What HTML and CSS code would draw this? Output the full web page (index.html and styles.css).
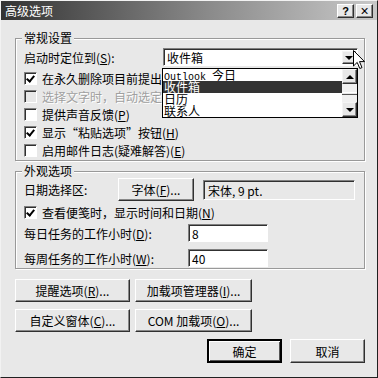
FILE: index.html
```html
<!DOCTYPE html>
<html lang="zh-CN">
  <head>
    <meta charset="UTF-8" />
    <title>高级选项</title>
    <link rel="stylesheet" href="styles.css">
  </head>
  <body>
    <div class="window">
      <div class="titlebar">
        <span class="title">高级选项</span>
        <span class="tbtn">?</span>
        <span class="tbtn close">×</span>
      </div>

      <div class="content">
        <fieldset class="group first">
          <legend>常规设置</legend>
          <div class="row combo-row">
            <label class="grow">启动时定位到(<u>S</u>):</label>
            <div class="combo">
              <span class="combo-text">收件箱</span>
              <span class="arrow-btn"><i class="tri down"></i></span>
            </div>
          </div>
          <!-- the open list hides the rest of these two rows -->
          <div class="check-row"><span class="box checked"></span><span class="cut">在永久删除项目前提出</span></div>
          <div class="check-row disabled"><span class="box dim"></span><span class="cut">选择文字时，自动选定</span></div>
          <div class="check-row"><span class="box"></span>提供声音反馈(<u>P</u>)</div>
          <div class="check-row"><span class="box checked"></span>显示“粘贴选项”按钮(<u>H</u>)</div>
          <div class="check-row"><span class="box"></span>启用邮件日志(疑难解答)(<u>E</u>)</div>
        </fieldset>

        <fieldset class="group second">
          <legend>外观选项</legend>
          <div class="row date-row">
            <label class="date-label">日期选择区:</label>
            <button class="btn font-btn">字体(<u>F</u>)...</button>
            <div class="font-field">宋体, 9 pt.</div>
          </div>
          <div class="check-row note-row"><span class="box checked"></span>查看便笺时，显示时间和日期(<u>N</u>)</div>
          <div class="row hours-row">
            <label class="hours-label">每日任务的工作小时(<u>D</u>):</label>
            <div class="field">8</div>
          </div>
          <div class="row hours-row weekly">
            <label class="hours-label">每周任务的工作小时(<u>W</u>):</label>
            <div class="field">40</div>
          </div>
        </fieldset>

        <div class="btn-row top">
          <button class="btn wide-a">提醒选项(<u>R</u>)...</button>
          <button class="btn wide-b">加载项管理器(<u>I</u>)...</button>
        </div>
        <div class="btn-row">
          <button class="btn wide-a">自定义窗体(<u>C</u>)...</button>
          <button class="btn wide-b">COM 加载项(<u>O</u>)...</button>
        </div>
        <div class="btn-row end">
          <button class="btn action default">确定</button>
          <button class="btn action">取消</button>
        </div>
      </div>

      <!-- open dropdown of the combo box -->
      <div class="dropdown">
        <div class="items">
          <div class="item"><span class="mono">Outlook </span>今日</div>
          <div class="item selected">收件箱</div>
          <div class="item">日历</div>
          <div class="item">联系人</div>
        </div>
        <div class="scrollbar">
          <span class="sb-btn"><i class="tri up"></i></span>
          <span class="sb-track"><span class="sb-thumb"></span></span>
          <span class="sb-btn"><i class="tri down"></i></span>
        </div>
      </div>

      <svg class="cursor" width="12" height="20" viewBox="0 0 12 20">
        <path d="M0.5 0.5 L0.5 16 L4.2 12.4 L6.8 18.5 L9 17.6 L6.5 11.6 L11.5 11.6 Z" fill="#fff" stroke="#000" stroke-width="1" />
      </svg>
    </div>
  </body>
</html>
```

FILE: styles.css
```css
body {
  margin: 0;
  font-family: "Noto Sans CJK SC", sans-serif;
  font-size: 12px;
  color: #000;
}
.window {
  position: relative;
  width: 378px;
  height: 378px;
  box-sizing: border-box;
  background: #e8e8e8;
  border: 1px solid;
  border-color: #f2f2f2 #202020 #202020 #f2f2f2;
}
.titlebar {
  height: 19px;
  display: flex;
  align-items: center;
  gap: 2px;
  padding: 0 4px 0 4px;
  background: linear-gradient(90deg, #333 0%, #8a8a8a 55%, #c8c8c8 100%);
  color: #fff;
}
.title {
  flex: 1;
  font-size: 12px;
  line-height: 19px;
}
.tbtn {
  width: 15px;
  height: 12px;
  display: flex;
  align-items: center;
  justify-content: center;
  background: #e8e8e8;
  color: #000;
  font-family: "Liberation Sans", sans-serif;
  font-weight: bold;
  font-size: 11px;
  border: 1px solid;
  border-color: #fff #303030 #303030 #fff;
  box-shadow: inset -1px -1px 0 #888;
}
.close {
  font-size: 14px;
  font-weight: normal;
}
.content {
  padding: 0 12px 0 14px;
}
.group {
  margin: 0;
  padding: 0 6px 1px 8px;
  border: 1px solid #999;
  box-shadow: inset 1px 1px 0 #fff, 1px 1px 0 #fff;
}
.group legend {
  padding: 0 2px;
  margin-left: -2px;
  line-height: 14px;
  background: #e8e8e8;
}
.first {
  margin-top: 11px;
}
.second {
  margin-top: 3px;
}
.row {
  display: flex;
  align-items: center;
}
.grow {
  flex: 1;
}
.combo-row {
  margin-top: 3px;
  height: 18px;
}
.combo {
  width: 195px;
  height: 18px;
  box-sizing: border-box;
  display: flex;
  align-items: center;
  background: #fff;
  border: 1px solid;
  border-color: #808080 #fff #fff #808080;
  box-shadow: inset 1px 1px 0 #303030;
  padding: 2px 1px 1px 3px;
}
.combo-text {
  flex: 1;
  line-height: 14px;
}
.arrow-btn,
.sb-btn {
  width: 14px;
  height: 13px;
  box-sizing: border-box;
  display: flex;
  align-items: center;
  justify-content: center;
  background: #e8e8e8;
  border: 1px solid;
  border-color: #f4f4f4 #303030 #303030 #f4f4f4;
  box-shadow: inset -1px -1px 0 #888;
}
.tri {
  width: 0;
  height: 0;
  border-left: 4px solid transparent;
  border-right: 4px solid transparent;
}
.tri.down {
  border-top: 4px solid #000;
}
.tri.up {
  border-bottom: 4px solid #000;
}
.check-row {
  display: flex;
  align-items: center;
  height: 18px;
}
.combo-row + .check-row {
  margin-top: 3px;
}
.cut {
  white-space: nowrap;
}
.box {
  position: relative;
  flex: none;
  width: 13px;
  height: 13px;
  box-sizing: border-box;
  margin-right: 5px;
  background: #fff;
  border: 1px solid;
  border-color: #808080 #fff #fff #808080;
  box-shadow: inset 1px 1px 0 #303030;
}
.box.dim {
  background: #e8e8e8;
}
.box.checked::after {
  content: "";
  position: absolute;
  left: 3px;
  top: 1px;
  width: 3px;
  height: 6px;
  border: solid #000;
  border-width: 0 2px 2px 0;
  transform: rotate(40deg);
}
.disabled {
  color: #a0a0a0;
  text-shadow: 1px 1px 0 #fff;
}
.date-row {
  height: 23px;
}
.date-label {
  width: 94px;
}
.btn {
  font-family: "Noto Sans CJK SC", sans-serif;
  font-size: 12px;
  color: #000;
  height: 23px;
  padding: 0;
  background: #e8e8e8;
  border: 1px solid;
  border-color: #fff #303030 #303030 #fff;
  box-shadow: inset -1px -1px 0 #888;
}
.font-btn {
  width: 76px;
  margin-right: 9px;
}
.font-field {
  width: 152px;
  height: 20px;
  box-sizing: border-box;
  padding: 2px 4px;
  line-height: 15px;
  border: 1px solid;
  border-color: #808080 #fff #fff #808080;
  box-shadow: inset 1px 1px 0 #303030;
}
.note-row {
  margin-top: 2px;
}
.hours-row {
  margin-top: 3px;
  height: 18px;
}
.hours-row.weekly {
  margin-top: 7px;
}
.hours-label {
  width: 164px;
}
.field {
  width: 80px;
  height: 18px;
  box-sizing: border-box;
  padding: 2px 3px;
  line-height: 14px;
  background: #fff;
  border: 1px solid;
  border-color: #808080 #fff #fff #808080;
  box-shadow: inset 1px 1px 0 #303030;
}
.btn-row {
  display: flex;
  gap: 5px;
  margin-top: 7px;
}
.btn-row.top {
  margin-top: 10px;
}
.btn-row.end {
  justify-content: flex-end;
  gap: 8px;
}
.wide-a {
  width: 115px;
}
.wide-b {
  width: 117px;
}
.action {
  width: 75px;
  height: 24px;
}
.default {
  border: 2px solid;
  border-color: #000;
  box-shadow: inset 1px 1px 0 #fff, inset -1px -1px 0 #555;
}
.dropdown {
  position: absolute;
  left: 161px;
  top: 67px;
  width: 196px;
  height: 50px;
  box-sizing: border-box;
  display: flex;
  background: #fff;
  border: 1px solid #000;
}
.items {
  flex: 1;
}
.item {
  height: 12px;
  line-height: 12px;
  padding-left: 1px;
  white-space: nowrap;
}
.mono {
  font-family: "Liberation Mono", monospace;
  font-size: 10px;
}
.item.selected {
  background: #333;
  color: #fff;
}
.scrollbar {
  width: 15px;
  display: flex;
  flex-direction: column;
}
.scrollbar .sb-btn {
  width: 15px;
  height: 15px;
}
.sb-track {
  flex: 1;
  background: #f0f0f0;
  display: flex;
  align-items: center;
}
.sb-thumb {
  width: 15px;
  height: 3px;
  box-sizing: border-box;
  background: #e8e8e8;
  border-top: 1px solid #fff;
  border-bottom: 1px solid #555;
}
.cursor {
  position: absolute;
  left: 352px;
  top: 49px;
}
```
